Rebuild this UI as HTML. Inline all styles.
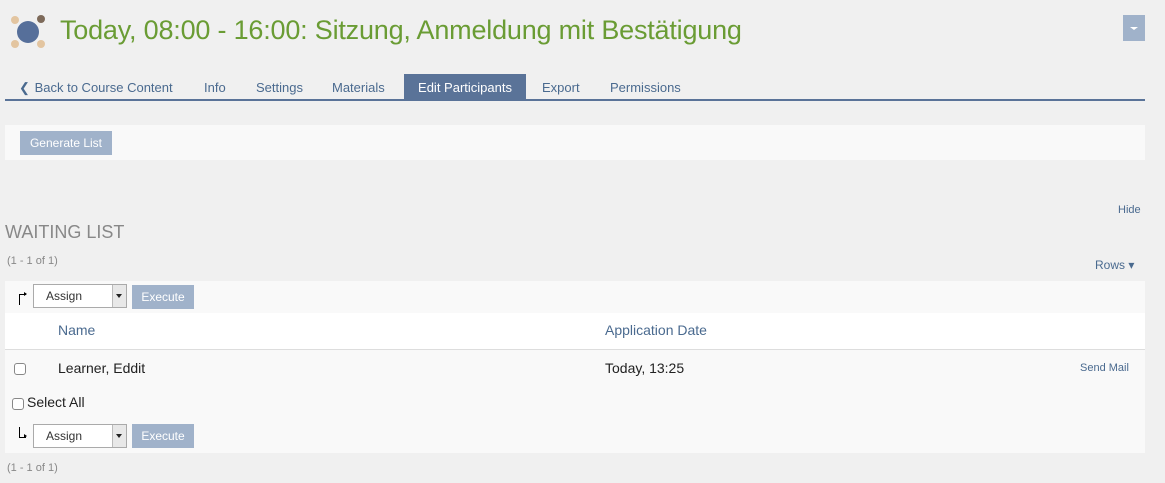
<!DOCTYPE html>
<html><head><style>
body{margin:0;width:1165px;height:483px;background:#f0f0f0;font-family:"Liberation Sans",sans-serif;position:relative;overflow:hidden}
.a{position:absolute}
.btn{position:absolute;background:#a0b2ca;color:#fff;font-size:12px;text-align:center;line-height:24px}
.sel{position:absolute;width:94px;height:24px;background:#fff;border:1px solid #aaa;box-sizing:border-box;font-size:12px;line-height:22px;padding-left:12px;color:#333}
.sel i{position:absolute;right:0;top:0;width:13px;height:22px;background:#e8e8e8;border-left:1px solid #bbb}
.sel i:after{content:"";position:absolute;left:3px;top:9px;border:3px solid transparent;border-top:4px solid #222}
.cb{position:absolute;width:10px;height:10px;border:1px solid #888;border-radius:3px;background:#fff}
.tab{position:absolute;top:74px;height:26px;line-height:28px;font-size:13px;color:#4a6a8f}
</style></head><body>
<div class="a" style="left:11px;top:16px;width:8px;height:8px;border-radius:50%;background:#e3c5a0"></div>
<div class="a" style="left:37px;top:15px;width:8px;height:8px;border-radius:50%;background:#7d6a5a"></div>
<div class="a" style="left:11px;top:40px;width:8px;height:8px;border-radius:50%;background:#e3c5a0"></div>
<div class="a" style="left:37px;top:40px;width:8px;height:8px;border-radius:50%;background:#e3c5a0"></div>
<div class="a" style="left:17px;top:21px;width:22px;height:22px;border-radius:50%;background:#566f9a"></div>
<div class="a" style="left:60px;top:15px;font-size:27px;letter-spacing:-0.2px;color:#6a9c34;white-space:nowrap">Today, 08:00 - 16:00: Sitzung, Anmeldung mit Bestätigung</div>
<div class="a" style="left:1123px;top:15px;width:22px;height:26px;background:#a0b2ca"><div class="a" style="left:7px;top:12px;border:4px solid transparent;border-top:3px solid #fff"></div></div>
<div class="tab" style="left:19px">&#10094;&#8202; Back to Course Content</div>
<div class="tab" style="left:204px">Info</div>
<div class="tab" style="left:256px">Settings</div>
<div class="tab" style="left:332px">Materials</div>
<div class="tab" style="left:404px;width:122px;background:#5a7398;color:#fff;text-align:center">Edit Participants</div>
<div class="tab" style="left:542px">Export</div>
<div class="tab" style="left:610px">Permissions</div>
<div class="a" style="left:5px;top:99px;width:1140px;height:2px;background:#5a7398"></div>
<div class="a" style="left:5px;top:125px;width:1140px;height:35px;background:#f9f9f9"></div>
<div class="btn" style="left:20px;top:131px;width:92px">Generate List</div>
<div class="a" style="left:1118px;top:204px;font-size:11px;color:#4a6a8f">Hide</div>
<div class="a" style="left:5px;top:222px;font-size:18px;color:#888">WAITING LIST</div>
<div class="a" style="left:7px;top:255px;font-size:11px;color:#888">(1 - 1 of 1)</div>
<div class="a" style="left:1095px;top:258px;font-size:12px;color:#4a6a8f">Rows &#9662;</div>
<div class="a" style="left:5px;top:281px;width:1140px;height:172px;background:#f9f9f9"></div>
<div class="a" style="left:5px;top:313px;width:1140px;height:36px;background:#fff;border-bottom:1px solid #ddd"></div>
<div class="a" style="left:19px;top:294px;width:6px;height:10px;border-left:1px solid #000;border-top:1px solid #000"></div>
<div class="a" style="left:24px;top:292px;border:2px solid transparent;border-left:3px solid #000"></div>
<div class="sel" style="left:33px;top:284px">Assign<i></i></div>
<div class="btn" style="left:132px;top:285px;width:62px">Execute</div>
<div class="a" style="left:58px;top:322px;font-size:14px;color:#4a6a8f">Name</div>
<div class="a" style="left:605px;top:322px;font-size:14px;color:#4a6a8f">Application Date</div>
<div class="cb" style="left:14px;top:363px"></div>
<div class="a" style="left:58px;top:360px;font-size:14px;color:#222">Learner, Eddit</div>
<div class="a" style="left:605px;top:360px;font-size:14px;color:#222">Today, 13:25</div>
<div class="a" style="left:1080px;top:362px;font-size:11px;color:#4a6a8f">Send Mail</div>
<div class="cb" style="left:12px;top:398px"></div>
<div class="a" style="left:27px;top:394px;font-size:14px;color:#222">Select All</div>
<div class="a" style="left:19px;top:427px;width:6px;height:10px;border-left:1px solid #000;border-bottom:1px solid #000"></div>
<div class="a" style="left:24px;top:434px;border:2px solid transparent;border-left:3px solid #000"></div>
<div class="sel" style="left:33px;top:424px">Assign<i></i></div>
<div class="btn" style="left:132px;top:424px;width:62px">Execute</div>
<div class="a" style="left:7px;top:462px;font-size:11px;color:#888">(1 - 1 of 1)</div>
</body></html>
